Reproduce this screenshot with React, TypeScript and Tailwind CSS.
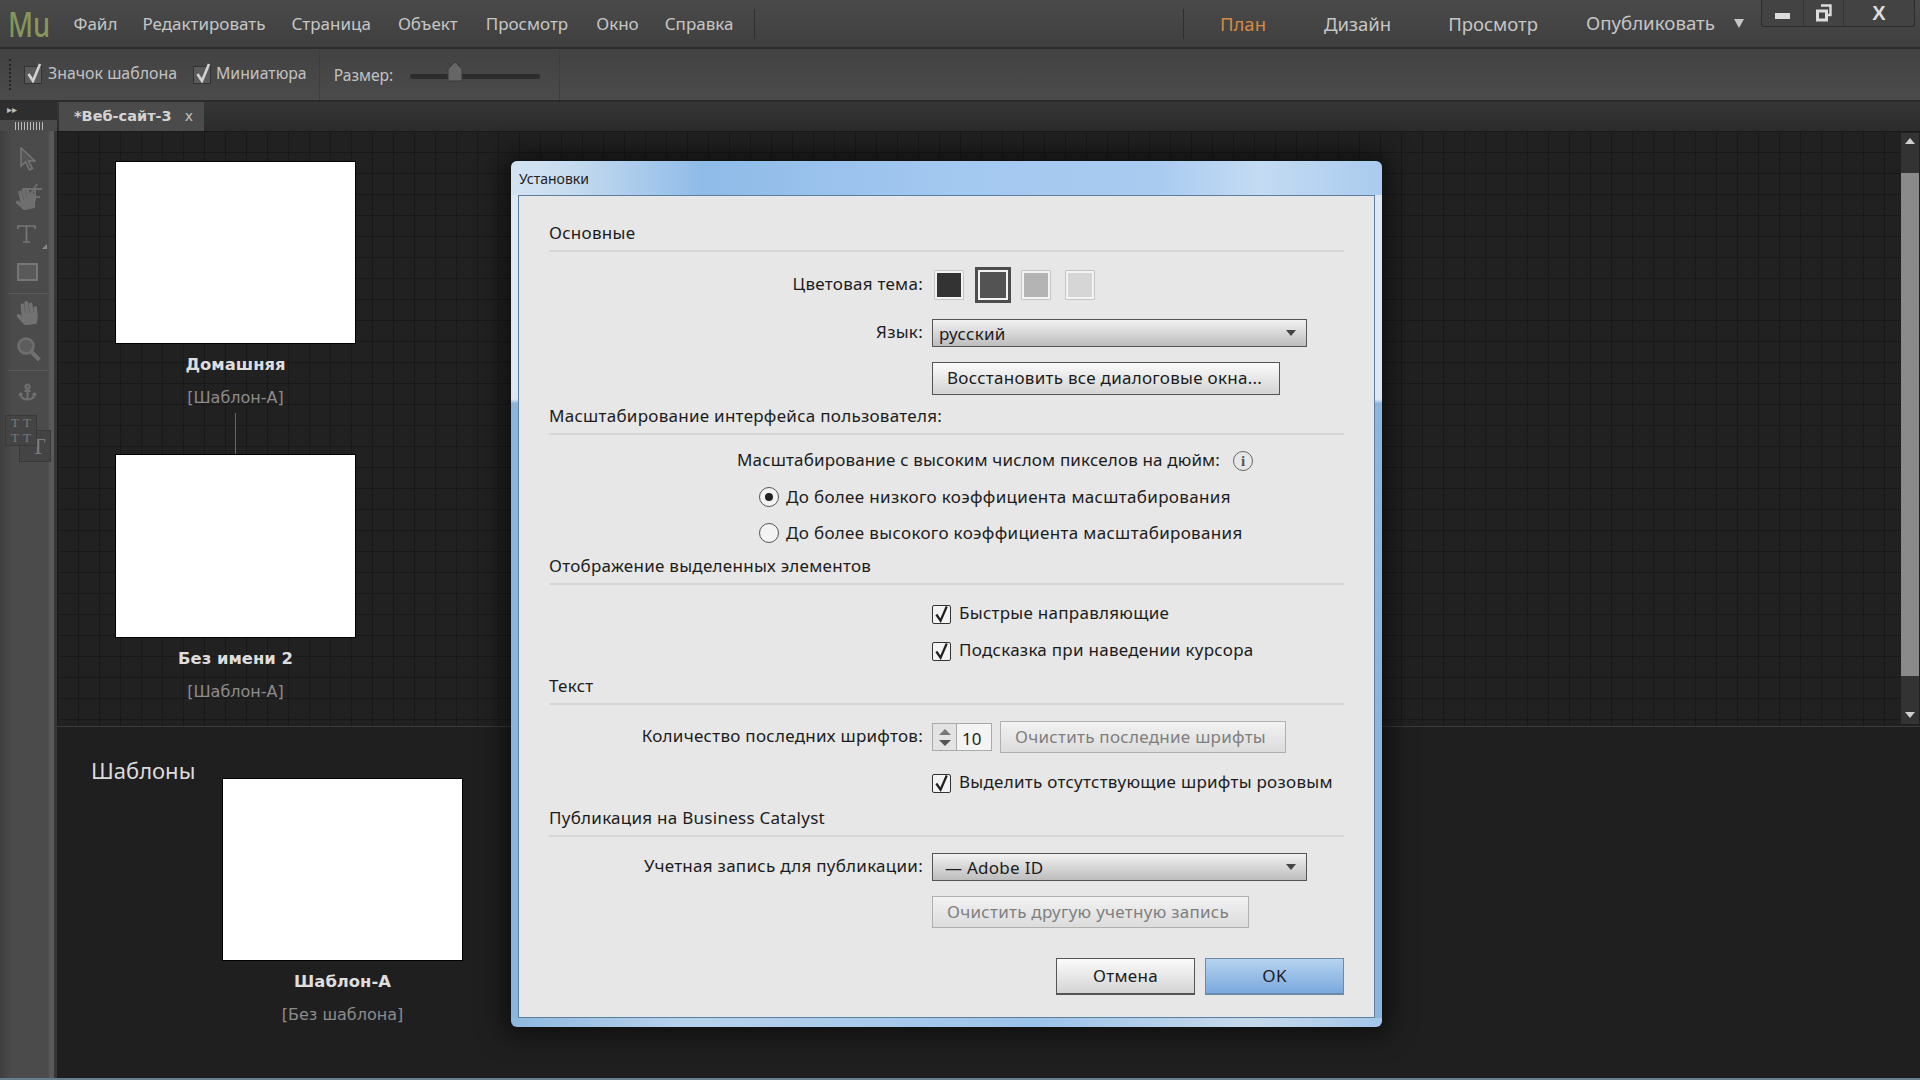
import { FaAnchor, FaHandPaper } from "react-icons/fa"

const menuItems = [
  { label: "Файл", ml: "ml-[25px]" },
  { label: "Редактировать", ml: "ml-[25px]" },
  { label: "Страница", ml: "ml-[26px]" },
  { label: "Объект", ml: "ml-[27px]" },
  { label: "Просмотр", ml: "ml-[28px]" },
  { label: "Окно", ml: "ml-[28px]" },
  { label: "Справка", ml: "ml-[26px]" },
]

function DarkCheck() {
  return (
    <span className="relative block h-[18px] w-[18px] border border-[#333] bg-[#5a5a5a]">
      <svg viewBox="0 0 18 20" className="absolute left-0 top-[-4px] h-[20px] w-[18px]">
        <path d="M3.5 11l4.5 7 7-17" fill="none" stroke="#d2d2d2" strokeWidth="2.6" />
      </svg>
    </span>
  )
}

function Thumb({ title, sub, height }: { title: string; sub: string; height: string }) {
  return (
    <div className="flex w-[239px] flex-col items-center">
      <div className={`w-[239px] bg-white outline outline-1 outline-black ${height}`} />
      <div className="mt-[10px] h-[24px] text-[16.4px] font-bold leading-[24px] text-[#dedede]">{title}</div>
      <div className="mt-[10px] h-[22px] text-[16px] leading-[22px] text-[#8c8c8c]">{sub}</div>
    </div>
  )
}

function SectionHeading({ children }: { children: string }) {
  return (
    <div className="h-[30px] border-b-2 border-[#d6d6d6] pb-[2px] text-[17px] leading-[22px] tracking-[0.27px]">{children}</div>
  )
}

function Label({ children }: { children: string }) {
  return <div className="w-[374px] shrink-0 pb-[3px] text-right text-[17px] leading-[24px] tracking-[0.27px]">{children}</div>
}

function LightCheck({ text, className }: { text: string; className: string }) {
  return (
    <div className={`ml-[383px] flex h-[24px] items-center ${className}`}>
      <span className="relative block h-[19px] w-[19px] rounded-[2px] border border-[#333] bg-[#f4f4f4]">
        <svg viewBox="0 0 19 19" className="absolute left-0 top-[-1px] h-[19px] w-[18px]">
          <path d="M3.5 9.5l4.5 6.5 6.5-15" fill="none" stroke="#222" strokeWidth="2.4" />
        </svg>
      </span>
      <span className="ml-[8px] pb-[2px] text-[17px] leading-[24px] tracking-[0.27px]">{text}</span>
    </div>
  )
}

function Radio({ checked, text, className }: { checked?: boolean; text: string; className: string }) {
  return (
    <div className={`ml-[210px] flex h-[24px] items-center ${className}`}>
      <span className="flex h-[20px] w-[20px] items-center justify-center rounded-full border border-[#555] bg-[#f3f3f3]">
        {checked && <span className="h-[8px] w-[8px] rounded-full bg-[#222]" />}
      </span>
      <span className="ml-[7px] pb-[1px] text-[17px] leading-[24px] tracking-[0.33px]">{text}</span>
    </div>
  )
}

function SelectBox({ value, height, pad }: { value: string; height: string; pad: string }) {
  return (
    <div
      className={`flex w-[375px] items-center justify-between border border-[#555] bg-gradient-to-b from-[#f2f2f2] to-[#bdbdbd] pr-[10px] text-[17px] tracking-[0.27px] ${height} ${pad}`}
    >
      <span className="mt-[2px]">{value}</span>
      <span className="h-0 w-0 border-x-[5px] border-t-[6px] border-x-transparent border-t-[#444]" />
    </div>
  )
}

function ThemeSwatch({ color }: { color: string }) {
  return (
    <span className="block h-[30px] w-[30px] rounded-[1px] border border-[#c4c4c4] bg-[#f3f3f3] p-[2px]">
      <span className={`block h-full w-full ${color}`} />
    </span>
  )
}

function Sidebar() {
  return (
    <aside className="flex w-[57px] shrink-0 flex-col items-start bg-[linear-gradient(90deg,#3f3f3f_0,#4c4b4c_12px,#4c4b4c_48px,#5a5a5a_50px,#5a5a5a_54px,#383738_54px)] text-[#6f6f6f]">
      <div className="ml-[20px] mt-[16px] h-[25px] w-[16px]">
        <svg viewBox="0 0 16 25" className="h-[25px] w-[16px]">
          <path d="M1 1v18l4.5-4 4 8 3-1.5-4-7.5H15z" fill="#565556" stroke="#767676" strokeWidth="1.5" />
        </svg>
      </div>
      <div className="relative ml-[15px] mt-[11px] h-[27px] w-[27px]">
        <FaHandPaper className="absolute bottom-0 left-0 h-[22px] w-[20px] -rotate-12" />
        <svg viewBox="0 0 27 27" className="absolute inset-0 h-[27px] w-[27px]">
          <path d="M8 6h19M22 1L12 17M12 14h13M20 6v12" fill="none" stroke="#6f6f6f" strokeWidth="2" />
        </svg>
      </div>
      <div className="relative ml-[17px] mt-[15px] h-[18px] w-[19px]">
        <svg viewBox="0 0 19 18" className="h-[18px] w-[19px]">
          <path d="M1 4V1h17v3M9.5 1v16M6 17h7" fill="none" stroke="#767676" strokeWidth="1.7" />
        </svg>
        <span className="absolute left-[25px] top-[19px] h-0 w-0 border-b-[5px] border-l-[5px] border-b-[#8a8a8a] border-l-transparent" />
      </div>
      <div className="ml-[17px] mt-[20px] h-[18px] w-[21px] border-2 border-[#767676] bg-[#5a595a]" />
      <div className="ml-[8px] mt-[12px] h-px w-[41px] bg-[#5a595a]" />
      <FaHandPaper className="ml-[15px] mt-[7px] h-[24px] w-[24px] -rotate-6 text-[#727272]" />
      <div className="ml-[17px] mt-[12px] h-[25px] w-[24px]">
        <svg viewBox="0 0 24 25" className="h-[25px] w-[24px]">
          <circle cx="9" cy="9" r="7.5" fill="#5e5d5e" stroke="#6f6f6f" strokeWidth="2.5" />
          <path d="M14.5 15l8 8" fill="none" stroke="#6f6f6f" strokeWidth="4" />
        </svg>
      </div>
      <div className="ml-[8px] mt-[8px] h-px w-[41px] bg-[#5a595a]" />
      <FaAnchor className="ml-[18px] mt-[11px] h-[20px] w-[19px]" />
      <div className="relative mt-[13px] h-[47px] w-[54px]">
        <div className="absolute left-[19px] top-[15px] flex h-[32px] w-[32px] items-center justify-center border border-[#393939] bg-[#454445] pl-[6px] font-['Liberation_Serif',serif] text-[24px] leading-none text-[#7a7a7a]">
          T
        </div>
        <div className="absolute left-[5px] top-0 grid h-[31px] w-[32px] grid-cols-2 border border-[#393939] bg-[#454445] px-[3px] text-center font-['Liberation_Serif',serif] text-[13px] leading-[14px] text-[#7a7a7a]">
          <span>T</span>
          <span>T</span>
          <span>T</span>
          <span>T</span>
        </div>
      </div>
    </aside>
  )
}

function PreferencesDialog() {
  return (
    <div className="absolute left-[511px] top-[161px] flex h-[866px] w-[871px] flex-col rounded-[6px] px-[7px] pb-[9px] shadow-[0_0_26px_8px_rgba(0,0,0,0.55)] [background:linear-gradient(90deg,#d3e3f2_0%,#c9ddf0_6%,#8fbbe8_22%,#a3c8f0_50%,#a9cbf0_74%,#c4dbf3_86%,#a9cbee_100%)_top/100%_34px_no-repeat,linear-gradient(90deg,#8fb8e0_0%,#b7d2ec_20%,#9cc3ea_60%,#c6d9ea_85%,#a3c6ea_100%)_bottom/100%_9px_no-repeat,linear-gradient(180deg,#dde8f2_0,#dde8f2_27.5%,#8cb5dc_28%,#8cb5dc_100%)]">
      <div className="flex h-[34px] shrink-0 items-center pl-[1px] pt-[1px] text-[14px] text-[#222]">Установки</div>
      <div className="flex-1 border border-[#5d7f9f] bg-[#e7e7e7] px-[30px] pt-[26px] text-[#1c1c1c]">
        <SectionHeading>Основные</SectionHeading>
        <div className="mt-[15px] flex h-[36px] items-center">
          <Label>Цветовая тема:</Label>
          <div className="ml-[11px] flex items-center">
            <ThemeSwatch color="bg-[#333333]" />
            <span className="ml-[11px] block h-[36px] w-[36px] border-[3px] border-[#4d4d4d] bg-[#f3f3f3] p-[2px]">
              <span className="block h-full w-full bg-[#535353]" />
            </span>
            <span className="ml-[10px]">
              <ThemeSwatch color="bg-[#b4b4b4]" />
            </span>
            <span className="ml-[14px]">
              <ThemeSwatch color="bg-[#d6d6d6]" />
            </span>
          </div>
        </div>
        <div className="mt-[16px] flex items-center">
          <Label>Язык:</Label>
          <div className="ml-[9px]">
            <SelectBox value="русский" height="h-[28px]" pad="pl-[6px]" />
          </div>
        </div>
        <div className="ml-[383px] mt-[15px] flex h-[33px] w-[348px] items-center border border-[#555] bg-gradient-to-b from-[#fbfbfb] to-[#d4d4d4] pb-[2px] pl-[14px] text-[17px] tracking-[0.27px]">
          Восстановить все диалоговые окна...
        </div>

        <div className="mt-[10px]">
          <SectionHeading>Масштабирование интерфейса пользователя:</SectionHeading>
        </div>
        <div className="ml-[188px] mt-[14px] flex h-[24px] items-center">
          <span className="pb-[2px] text-[17px] leading-[24px] tracking-[0.15px]">Масштабирование с высоким числом пикселов на дюйм:</span>
          <span className="ml-[13px] flex h-[20px] w-[20px] items-center justify-center rounded-full border-[1.5px] border-[#666] font-['Liberation_Serif',serif] text-[15px] font-bold leading-none text-[#555]">
            i
          </span>
        </div>
        <Radio checked text="До более низкого коэффициента масштабирования" className="mt-[12px]" />
        <Radio text="До более высокого коэффициента масштабирования" className="mt-[12px]" />

        <div className="mt-[10px]">
          <SectionHeading>Отображение выделенных элементов</SectionHeading>
        </div>
        <LightCheck text="Быстрые направляющие" className="mt-[17px]" />
        <LightCheck text="Подсказка при наведении курсора" className="mt-[13px]" />

        <div className="mt-[12px]">
          <SectionHeading>Текст</SectionHeading>
        </div>
        <div className="mt-[16px] flex h-[32px] items-center">
          <Label>Количество последних шрифтов:</Label>
          <div className="ml-[9px] flex h-[28px] w-[60px] border border-[#aaa] bg-[#f4f4f4] text-[17px]">
            <div className="flex w-[24px] flex-col items-center justify-center gap-[5px] border-r border-[#aaa] bg-[#e3e3e3]">
              <span className="h-0 w-0 border-x-[6px] border-b-[6px] border-x-transparent border-b-[#777]" />
              <span className="h-0 w-0 border-x-[6px] border-t-[6px] border-x-transparent border-t-[#555]" />
            </div>
            <span className="ml-[5px] mt-[2px]">10</span>
          </div>
          <div className="ml-[8px] flex h-[32px] w-[286px] items-center border border-[#b0b0b0] bg-gradient-to-b from-[#f2f2f2] to-[#dcdcdc] pl-[14px] text-[17px] tracking-[0.27px] text-[#7f7f7f]">
            Очистить последние шрифты
          </div>
        </div>
        <LightCheck text="Выделить отсутствующие шрифты розовым" className="mt-[18px]" />

        <div className="mt-[12px]">
          <SectionHeading>Публикация на Business Catalyst</SectionHeading>
        </div>
        <div className="mt-[16px] flex items-center">
          <Label>Учетная запись для публикации:</Label>
          <div className="ml-[9px]">
            <SelectBox value="— Adobe ID" height="h-[28px]" pad="pl-[12px]" />
          </div>
        </div>
        <div className="ml-[383px] mt-[15px] flex h-[32px] w-[317px] items-center border border-[#b0b0b0] bg-gradient-to-b from-[#f2f2f2] to-[#dcdcdc] pl-[14px] text-[17px] tracking-[0.27px] text-[#7f7f7f]">
          Очистить другую учетную запись
        </div>
        <div className="mt-[30px] flex justify-end gap-[10px] text-[17px] tracking-[0.27px]">
          <div className="flex h-[37px] w-[139px] items-center justify-center border border-b-2 border-[#555] bg-gradient-to-b from-[#fbfbfb] to-[#d4d4d4]">
            Отмена
          </div>
          <div className="flex h-[37px] w-[139px] items-center justify-center border border-b-2 border-[#6d8aa8] bg-gradient-to-b from-[#b6d3ef] to-[#7aa9dd]">
            OK
          </div>
        </div>
      </div>
    </div>
  )
}

export default function App() {
  return (
    <div className="relative flex h-[1080px] w-[1920px] flex-col overflow-hidden bg-[#201f20] font-['Noto_Sans',sans-serif]">
      {/* Menu bar */}
      <header className="flex h-[47px] shrink-0 items-center bg-gradient-to-b from-[#4a4a4a] to-[#3f3f3f] text-[17px] text-[#c6c6c6]">
        <span className="ml-[8px] w-[40.5px] origin-left scale-x-[0.78] text-[35px] font-medium leading-none text-[#86965a]">Mu</span>
        {menuItems.map((item) => (
          <span key={item.label} className={item.ml}>
            {item.label}
          </span>
        ))}
        <div className="ml-[21px] h-[30px] w-px bg-[#2f2f2f]" />
        <div className="flex-1" />
        <div className="h-[30px] w-px bg-[#2f2f2f]" />
        <span className="ml-[36px] text-[18.5px] text-[#d68a42]">План</span>
        <span className="ml-[58px] text-[18.5px]">Дизайн</span>
        <span className="ml-[57px] text-[18.5px]">Просмотр</span>
        <span className="ml-[48px] text-[18.7px]">Опубликовать</span>
        <span className="ml-[19px] h-0 w-0 border-x-[5px] border-t-[9px] border-x-transparent border-t-[#c6c6c6]" />
        {/* window buttons */}
        <div className="mb-[20px] ml-[17px] mr-[5px] flex h-[27px] w-[154px] rounded-b-[3px] border border-t-0 border-[#2c2c2c] bg-[#434343]">
          <div className="flex w-[42px] items-center justify-center border-r border-[#363636]">
            <span className="mt-[6px] h-[6px] w-[15px] bg-[#dcdcdc]" />
          </div>
          <div className="flex w-[40px] items-center justify-center border-r border-[#363636]">
            <svg viewBox="0 0 16 18" className="h-[18px] w-[16px]">
              <path d="M5 1.5h9.5v9.5H11" fill="none" stroke="#dcdcdc" strokeWidth="2.4" />
              <path d="M1.5 7h9v9h-9z" fill="none" stroke="#dcdcdc" strokeWidth="3" />
            </svg>
          </div>
          <div className="flex flex-1 items-center justify-center font-['Liberation_Sans',sans-serif] text-[20px] font-bold leading-[24px] text-[#dcdcdc]">X</div>
        </div>
      </header>

      {/* Toolbar */}
      <div className="flex h-[55px] shrink-0 items-center border-y-2 border-[#2c2c2c] bg-gradient-to-b from-[#424242] to-[#4b4b4b] text-[#c2c2c2]">
        <div className="ml-[9px] h-[31px] w-[2px] border-l-2 border-dotted border-[#242424]" />
        <div className="ml-[13px]">
          <DarkCheck />
        </div>
        <span className="ml-[6px] pb-[2px] text-[15.9px]">Значок шаблона</span>
        <div className="ml-[16px]">
          <DarkCheck />
        </div>
        <span className="ml-[5px] pb-[2px] text-[15.8px]">Миниатюра</span>
        <div className="ml-[12px] h-[50px] w-px bg-[#3e3e3e]" />
        <span className="ml-[14px] mt-[2px] text-[15.6px]">Размер:</span>
        <div className="relative ml-[17px] mt-[4px] h-[5px] w-[130px] rounded-[2px] bg-[#2c2c2c]">
          <svg viewBox="0 0 16 20" className="absolute left-[37px] top-[-12px] h-[20px] w-[16px]">
            <path d="M8 0l7 7v12H1V7z" fill="#666" stroke="#3a3a3a" />
          </svg>
        </div>
        <div className="ml-[19px] h-[50px] w-px bg-[#3e3e3e]" />
      </div>

      {/* Tab strip */}
      <div className="flex h-[29px] shrink-0 bg-gradient-to-b from-[#363636] to-[#2b2b2b]">
        <div className="flex w-[57px] shrink-0 flex-col">
          <div className="h-[18px] bg-[#2e2e2e] pl-[7px] text-[10px] leading-[14px] text-[#bdbdbd]">▸▸</div>
          <div className="flex h-[11px] items-end justify-center bg-[#4b4a4b] pb-[1px]">
            <div className="h-[8px] w-[28px] bg-[repeating-linear-gradient(90deg,#bbb_0,#bbb_1px,transparent_1px,transparent_3px)]" />
          </div>
        </div>
        <div className="ml-[2px] flex w-[145px] items-center bg-[#4b4b4b] pl-[15px] font-['DejaVu_Sans',sans-serif] text-[14.5px] font-bold text-[#d4d4d4]">
          *Веб-сайт-3
          <span className="ml-[13px] text-[14px] font-normal text-[#c0c0c0]">x</span>
        </div>
      </div>

      <div className="flex min-h-0 flex-1">
        <Sidebar />
        <main className="flex min-w-0 flex-1 flex-col font-['DejaVu_Sans',sans-serif]">
          <section className="flex h-[596px] shrink-0 border-b border-[#3b3b3b] bg-[#222122] bg-[linear-gradient(#1a191a_1px,transparent_1px),linear-gradient(90deg,#1a191a_1px,transparent_1px)] bg-[size:21px_21px]">
            <div className="ml-[59px] flex flex-1 flex-col items-start pt-[31px]">
              <Thumb title="Домашняя" sub="[Шаблон-А]" height="h-[181px]" />
              <div className="ml-[119px] mt-[4px] h-[42px] w-px bg-[#666]" />
              <Thumb title="Без имени 2" sub="[Шаблон-А]" height="h-[182px]" />
            </div>
            <div className="mb-[2px] mr-[1px] mt-[2px] flex w-[18px] flex-col items-center bg-[#333]">
              <span className="mt-[5px] h-0 w-0 border-x-[5px] border-b-[6px] border-x-transparent border-b-[#d0d0d0]" />
              <div className="mt-[29px] w-full flex-1 bg-[#8a8a8a]" />
              <div className="mb-[6px] mt-[36px] h-0 w-0 border-x-[5px] border-t-[6px] border-x-transparent border-t-[#d0d0d0]" />
            </div>
          </section>
          <section className="flex flex-1 items-start">
            <div className="ml-[34px] mt-[28px] w-[132px] font-['Noto_Sans',sans-serif] text-[22px] leading-[30px] text-[#dcdcdc]">Шаблоны</div>
            <div className="mt-[52px]">
              <Thumb title="Шаблон-А" sub="[Без шаблона]" height="h-[181px]" />
            </div>
          </section>
        </main>
      </div>
      <div className="h-[2px] shrink-0 bg-[#6a7d8a]" />

      <PreferencesDialog />
    </div>
  )
}
